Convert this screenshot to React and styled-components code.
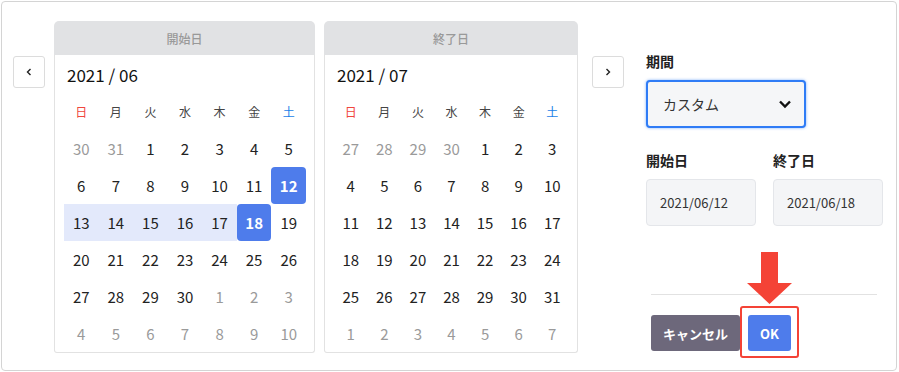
import React from "react";
import styled, { createGlobalStyle } from "styled-components";

const GlobalStyle = createGlobalStyle`
  body {
    margin: 0;
    background: #fff;
    font-family: "Noto Sans CJK JP", "Noto Sans", sans-serif;
    color: #222;
  }
`;

const Frame = styled.div`
  margin: 1px 0 0 1px;
  width: 896px;
  height: 370px;
  box-sizing: border-box;
  border: 1px solid #d4d4d4;
  border-radius: 4px;
  display: flex;
  align-items: flex-start;
  padding: 19px 0 0 11px;
`;

const NavButton = styled.button`
  width: 32px;
  height: 32px;
  margin-top: 35px;
  border: 1px solid #dcdcdc;
  border-radius: 3px;
  background: #fff;
  display: flex;
  align-items: center;
  justify-content: center;
  padding: 0;
  margin-left: ${(p) => p.$ml || 0}px;
`;

const Calendar = styled.div`
  width: ${(p) => p.$w}px;
  margin-left: ${(p) => p.$ml}px;
  display: flex;
  flex-direction: column;
`;

const CalHeader = styled.div`
  height: 34px;
  background: #e1e2e4;
  border-radius: 5px 5px 0 0;
  display: flex;
  align-items: center;
  justify-content: center;
  font-size: 12px;
  color: #999;
  font-weight: 500;
`;

const CalBody = styled.div`
  border: 1px solid #e2e2e2;
  border-top: none;
  border-radius: 0 0 3px 3px;
  padding: 0 8px 0 9px;
`;

const MonthTitle = styled.div`
  height: 38px;
  display: flex;
  align-items: center;
  padding-left: 3px;
  font-size: 17px;
  color: #111;
`;

const Grid = styled.div`
  display: grid;
  grid-template-columns: repeat(7, 1fr);
  grid-auto-rows: 37px;
`;

const Weekday = styled.div`
  display: flex;
  align-items: center;
  justify-content: center;
  font-size: 12px;
  color: ${(p) => (p.$sun ? "#f0463c" : p.$sat ? "#1a7fe8" : "#444")};
`;

const Day = styled.div`
  display: flex;
  align-items: center;
  justify-content: center;
  font-size: 15px;
  color: ${(p) => (p.$sel ? "#fff" : p.$out ? "#9a9a9a" : "#222")};
  font-weight: ${(p) => (p.$sel ? 700 : 400)};
  background: ${(p) => (p.$sel ? "#4e7ceb" : p.$range ? "#e3e9fb" : "transparent")};
  border-radius: ${(p) => (p.$sel ? "4px" : "0")};
`;

const Panel = styled.div`
  margin-left: 22px;
  padding-top: 30px;
  width: 236px;
  display: flex;
  flex-direction: column;
`;

const Label = styled.div`
  font-size: 14px;
  font-weight: 700;
  line-height: 20px;
  color: #222;
`;

const Select = styled.div`
  margin-top: 9px;
  width: 160px;
  height: 48px;
  box-sizing: border-box;
  border: 2px solid #2f7cf6;
  box-shadow: 0 0 3px rgba(47, 124, 246, 0.6);
  border-radius: 4px;
  background: #f5f6f8;
  display: flex;
  align-items: center;
  justify-content: space-between;
  padding: 0 12px 0 15px;
  font-size: 14px;
  color: #333;
`;

const DateRow = styled.div`
  display: flex;
  gap: 17px;
  margin-top: 22px;
`;

const DateField = styled.div`
  display: flex;
  flex-direction: column;
  gap: 9px;
`;

const DateInput = styled.div`
  width: 110px;
  height: 47px;
  box-sizing: border-box;
  border: 1px solid #e4e6ea;
  border-radius: 4px;
  background: #f4f5f7;
  display: flex;
  align-items: center;
  padding-left: 13px;
  font-size: 13px;
  color: #333;
`;

const Footer = styled.div`
  margin: 68px 5px 0 5px;
  border-top: 1px solid #e2e2e2;
  padding-top: 20px;
  display: flex;
  gap: 8px;
`;

const Button = styled.button`
  height: 36px;
  min-width: ${(p) => p.$w}px;
  padding: 0;
  border: none;
  border-radius: 3px;
  background: ${(p) => p.$bg};
  color: #fff;
  font-family: inherit;
  font-size: 13px;
  font-weight: 700;
  position: relative;
`;

const Highlight = styled.div`
  position: absolute;
  left: -8px;
  right: -8px;
  top: -9px;
  bottom: -7px;
  border: 2px solid #f44336;
  border-radius: 3px;
  pointer-events: none;
`;

const Arrow = styled.svg`
  position: absolute;
  left: 50%;
  top: -63px;
  transform: translateX(-50%);
`;

const Chevron = ({ dir }) => (
  <svg width="8" height="10" viewBox="0 0 8 10">
    <path
      d={dir === "left" ? "M5.5 2 L2.5 5 L5.5 8" : "M2.5 2 L5.5 5 L2.5 8"}
      fill="none"
      stroke="#222"
      strokeWidth="1.4"
    />
  </svg>
);

const WEEK = ["日", "月", "火", "水", "木", "金", "土"];

function buildDays(year, month) {
  const first = new Date(year, month - 1, 1).getDay();
  const start = new Date(year, month - 1, 1 - first);
  return Array.from({ length: 42 }, (_, i) => {
    const d = new Date(start.getFullYear(), start.getMonth(), start.getDate() + i);
    return { n: d.getDate(), out: d.getMonth() !== month - 1 };
  });
}

const MonthView = ({ title, year, month, width, ml, sel = [], range = [] }) => (
  <Calendar $w={width} $ml={ml}>
    <CalHeader>{title}</CalHeader>
    <CalBody>
      <MonthTitle>
        {year} / {String(month).padStart(2, "0")}
      </MonthTitle>
      <Grid>
        {WEEK.map((w, i) => (
          <Weekday key={w} $sun={i === 0} $sat={i === 6}>
            {w}
          </Weekday>
        ))}
        {buildDays(year, month).map((d, i) => (
          <Day
            key={i}
            $out={d.out}
            $sel={!d.out && sel.includes(d.n)}
            $range={!d.out && range.includes(d.n)}
          >
            {d.n}
          </Day>
        ))}
      </Grid>
    </CalBody>
  </Calendar>
);

export default function App() {
  return (
    <>
      <GlobalStyle />
      <Frame>
        <NavButton>
          <Chevron dir="left" />
        </NavButton>
        <MonthView
          title="開始日"
          year={2021}
          month={6}
          width={261}
          ml={9}
          sel={[12, 18]}
          range={[13, 14, 15, 16, 17]}
        />
        <MonthView title="終了日" year={2021} month={7} width={254} ml={9} />
        <NavButton $ml={14}>
          <Chevron dir="right" />
        </NavButton>
        <Panel>
          <Label>期間</Label>
          <Select>
            <span>カスタム</span>
            <svg width="14" height="10" viewBox="0 0 14 10">
              <path d="M2 2.5 L7 7.5 L12 2.5" fill="none" stroke="#111" strokeWidth="2.4" />
            </svg>
          </Select>
          <DateRow>
            <DateField>
              <Label>開始日</Label>
              <DateInput>2021/06/12</DateInput>
            </DateField>
            <DateField>
              <Label>終了日</Label>
              <DateInput>2021/06/18</DateInput>
            </DateField>
          </DateRow>
          <Footer>
            <Button $bg="#6d687b" $w={89}>
              キャンセル
            </Button>
            <Button $bg="#4e7ceb" $w={43}>
              OK
              <Highlight />
              <Arrow width="46" height="52" viewBox="0 0 46 52">
                <path d="M14 0 H31 V31 H45 L22.5 52 L0 31 H14 Z" fill="#f44336" />
              </Arrow>
            </Button>
          </Footer>
        </Panel>
      </Frame>
    </>
  );
}
